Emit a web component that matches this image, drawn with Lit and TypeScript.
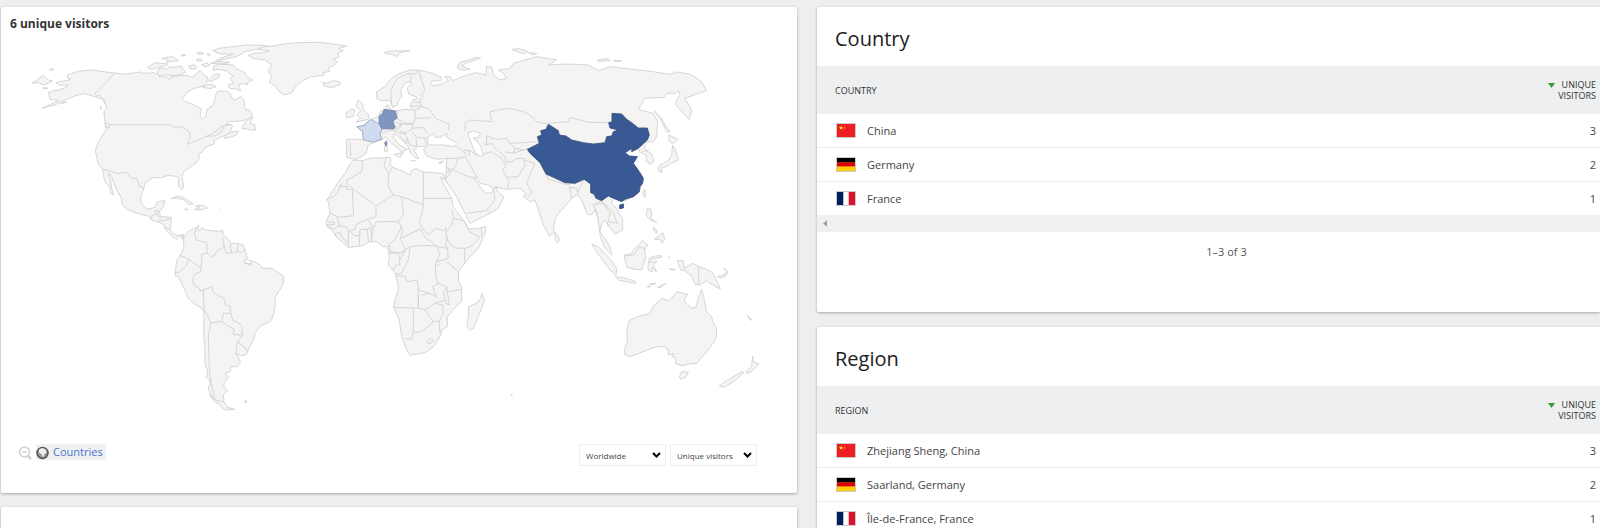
import { LitElement, html, svg, css } from "lit";
import { customElement, property } from "lit/decorators.js";

interface Shape {
  d: string;
  kind?: "low" | "mid" | "high" | "line" | "sea";
}
interface Sheet {
  x: number;
  y: number;
  shapes: Shape[];
}

// Each sheet is drawn at three units per pixel, from its own origin.
const SHEETS: Sheet[] = [
  {
    x: 0,
    y: 30,
    shapes: [
      { d: "M202,135 L235,124 275,120 310,125 345,129 365,132 400,129 420,126 430,130 460,128 475,134 480,142 500,140 508,149 512,140 530,138 560,136 575,142 590,132 597,122 605,126 612,136 622,140 620,158 610,168 580,176 562,186 552,200 545,206 552,212 575,222 604,236 600,258 606,268 618,256 622,236 640,226 645,205 649,190 655,183 680,184 690,190 696,205 705,210 722,200 732,210 735,235 738,240 749,240 756,252 757,262 730,272 690,275 676,284 696,284 696,292 688,312 670,318 650,328 640,334 645,341 618,350 608,365 597,372 597,385 592,395 570,412 552,425 545,440 550,460 550,474 545,480 538,472 535,460 536,442 530,440 515,437 500,437 485,443 460,443 435,458 432,475 422,500 423,515 428,525 440,538 465,532 472,515 495,512 490,530 478,545 482,560 514,562 514,575 510,598 520,612 535,618 548,612 552,622 548,628 540,616 530,628 515,618 498,600 492,585 480,578 455,570 445,558 430,555 405,548 380,537 366,523 365,505 350,480 335,440 325,428 332,450 335,475 341,495 332,490 328,466 318,460 312,445 308,418 295,402 290,380 286,362 295,335 308,315 318,300 315,280 312,245 320,235 312,208 285,200 250,190 225,198 190,212 165,225 125,235 160,220 175,212 150,208 145,188 155,184 175,180 200,172 202,165 182,166 168,159 175,155 200,152 212,148 203,144Z" },
      { d: "M345,129 L284,192 290,198 300,196 308,208 315,222M308,418 L330,422 350,430 380,427 396,446 410,443 418,468 432,475M330,284 H508 L520,291 545,291 565,303 572,315 562,343 600,328 630,315 655,300 664,288 690,284M672,288 L666,304 645,318 620,318M455,568 L456,556 468,552 463,543 475,541 472,556 482,562M470,574 L482,568 484,574 514,565M492,592 L510,598M548,612 L545,625", kind: "line" },
      { d: "M95,160 L112,150 130,135 145,150 158,153 145,160 130,165 115,157Z M148,119 l8,-3 5,3 -10,2Z M128,174 l8,-1 8,2 -8,1Z M182,219 l12,-4 5,2 -14,4Z M301,228 l3,8 -1,2Z M318,278 l12,6 -5,12 -10,-14Z" },
      { d: "M472,125 L480,114 500,117 512,108 520,113 545,108 548,118 558,125 545,133 520,137 500,134 475,138Z M442,113 L465,98 504,102 495,108 485,109 470,115 455,118Z M485,86 L500,82 520,80 535,92 510,95 500,98 505,88Z M543,76 l12,-3 2,4 -10,1Z M590,69 l12,-3 10,5 -18,2Z M620,72 l8,0 4,3 -8,0Z M588,89 l14,-3 6,5 -10,4Z M566,108 L582,104 592,112 585,118 570,115Z M604,104 L622,99 630,105 615,110Z M640,110 L655,102 700,105 710,116 718,120 735,128 740,140 757,150 742,158 742,165 732,160 715,164 722,183 705,176 690,176 684,165 700,160 690,145 700,138 678,122 655,118 640,122Z M625,150 L645,132 660,132 655,144 630,155Z M608,172 L625,163 640,165 648,170 630,176Z M638,62 L655,55 700,50 740,45 790,46 808,50 770,58 735,65 710,80 680,86 650,93 660,85 700,72 660,72Z M632,100 L650,94 690,97 672,102Z M725,295 L735,278 748,265 757,262 750,280 764,285 767,300 755,300Z M673,325 L682,312 700,305 715,303 710,315 695,320Z" },
      { d: "M514,506 L530,498 550,502 580,522 566,524 550,509 530,504Z M583,538 L594,534 587,527 610,526 622,534 608,539 590,540Z M553,537 l12,1 -5,3Z M598,526V539 M657,538h3" },
      { d: "M745,77 L760,70 790,68 808,62 775,58 790,50 820,48 850,42 900,38 960,37 1000,42 1040,48 1015,56 1030,62 1012,70 1018,80 1000,86 1012,95 1000,108 985,112 990,124 970,128 972,136 935,140 912,150 900,158 885,172 876,188 865,192 850,194 835,182 822,165 808,158 815,140 805,125 815,105 795,90 760,86Z" },
    ],
  },
  {
    x: 150,
    y: 190,
    shapes: [
      { d: "M100,150 L103,138 118,122 140,112 147,106 143,118 150,122 157,112 160,118 180,122 210,124 217,120 220,135 232,145 243,160 265,160 280,165 288,190 292,206 282,212 285,220 298,222 312,213 330,225 335,234 368,236 388,250 400,258 401,275 395,290 376,320 375,355 365,390 355,398 330,408 316,428 312,445 295,480 288,495 272,497 258,490 268,508 271,518 260,530 243,530 240,545 226,550 236,562 222,580 222,590 233,602 220,615 222,632 208,638 190,625 180,610 174,590 180,585 178,567 168,562 174,550 165,520 165,480 161,430 162,360 130,340 115,325 100,290 85,260 75,258 76,245 80,212 92,195 102,170Z" },
      { d: "M76,248 L88,246 108,228 116,208 95,198 88,197M140,112 L134,130 138,150 170,158 172,190 156,192 155,215 152,245M116,208 L150,232 155,232M172,190 L182,200 195,195 200,182 215,176 222,165 218,143M222,165 L228,190 245,188 240,170 243,162M245,188 L262,185 265,162M262,185 L275,188 284,178M152,245 L135,252 127,268 132,285 148,295 150,302 160,300 162,360M160,300 L185,290 190,308 222,325 226,345 240,348 242,370 220,370 215,395 182,398 172,375 162,360M242,370 L248,390 270,402 277,412 275,430 270,436 248,432 254,420 215,395M262,457 L258,490M262,457 L280,468 292,484M275,430 L280,432 262,457M182,398 L180,415 175,435 176,480 178,540 185,590 192,610 194,630 212,638M292,210 L305,212 300,228 285,215", kind: "line" },
      { d: "M178,614 L200,632 222,636 232,652 255,658 225,660 208,645 190,632Z M284,633 l5,-1 0,5 -5,0Z" },
    ],
  },
  {
    x: 310,
    y: 150,
    shapes: [
      { d: "M130,30 L160,32 180,25 240,22 243,32 240,42 248,52 280,64 300,75 306,60 318,56 340,66 400,70 406,90 392,82 400,100 425,145 430,170 440,185 462,212 470,230 474,236 500,236 528,230 525,250 505,295 480,320 460,345 446,365 445,390 455,415 455,455 430,478 412,500 412,530 395,540 393,555 370,590 345,608 300,616 290,600 275,560 268,510 250,470 258,440 266,415 256,370 235,345 238,318 232,290 218,290 200,275 180,275 155,288 115,292 100,278 80,262 65,240 50,228 48,215 60,190 55,155 50,150 60,135 90,90 105,70 118,45Z" },
      { d: "M158,34 L155,65 112,90 110,102M88,110 H110 V118 H125M50,150 L70,140 84,128 88,110 100,98M110,102 L198,168 250,135 234,108 236,70 222,48 228,25M236,70 L248,52M250,135 L275,140 340,165 340,66M342,145 H424M340,165 L336,190 328,215 340,240M127,118 L131,197 88,202 60,190M82,202 L88,228 108,230 118,242M88,226 L70,238 52,228M52,216h20v8h-20M198,168 L198,200 172,208 140,222 135,238 118,242M275,138 L280,195 265,215 200,215 190,232 174,210M265,215 L274,230 255,270 240,280 235,290M272,225 L278,245 270,265 285,295 278,308 240,305M274,265 L330,237 345,262 380,288 345,286 300,290 285,300M340,240 L355,255 378,235 400,242 408,232 408,245 412,265 406,290M408,262 L425,288 440,294 465,295 485,288 510,262 478,245 470,225 460,212 430,205 425,225 408,245M430,205 L426,180M465,295 L463,335M412,290 L415,325 380,335 390,310 380,290 412,295M410,335 L446,365M300,290 L295,330 275,370 256,372M380,335 L376,345 378,380 385,400 368,410 378,440 360,430 325,420 322,390 290,395 285,378 258,378M325,420 L325,470M250,472 L325,475 345,478M310,480 L310,545 305,568 285,565M310,548 L335,545 370,515 345,480M370,515 L388,512 400,490 398,465 375,460 345,480M325,435 L325,475M335,435 L360,430M375,460 L405,450 400,430 410,410 385,400M410,410 L418,465 408,460 408,448M412,425 L455,418M388,512 L390,550M238,310 L266,310 270,345 258,345 250,360M285,300 L270,330M115,242 V290M150,240 L148,288M150,238H172 L175,275M172,238 L182,232 185,275M190,230 L184,275M118,242 L135,258 150,255M80,262 L75,252 90,247 97,262 112,280M376,345 L388,345M240,285V308M515,235V262M352,574 L360,566 370,572 362,580 355,580Z", kind: "line" },
      { d: "M516,430 L523,450 515,475 490,535 480,540 470,528 475,500 476,470 500,460 512,445Z" },
    ],
  },
  {
    x: 310,
    y: 50,
    shapes: [
      { d: "M110,268 L150,268 160,270 158,245 142,232 160,226 183,208 205,200 212,183 232,178 226,168 236,165 240,178 256,183 285,178 310,180 300,168 310,150 322,146 318,140 296,132 292,115 305,100 298,96 285,98 272,122 275,140 264,155 262,165 248,172 240,150 215,152 200,145 200,125 222,112 245,85 270,70 300,60 325,60 360,68 395,82 393,92 365,93 362,100 368,108 395,102 415,92 405,80 420,80 430,92 445,85 470,75 500,68 528,75 530,50 545,50 550,75 570,90 590,85 580,70 565,60 600,55 610,40 680,20 740,30 715,45 770,42 835,45 865,62 900,50 1030,65 1080,73 1100,66 1140,72 1175,95 1190,122 1160,132 1125,145 1145,180 1138,208 1120,190 1098,165 1098,155 1110,135 1105,122 1095,130 1070,130 1062,142 1005,145 985,178 1000,182 1030,190 1043,215 1040,260 1030,275 1010,275 1003,290 1012,305 1025,312 1032,335 1020,342 1010,335 1008,315 988,305 985,296 965,305 966,295 945,308 958,318 982,320 970,340 1000,385 988,425 975,438 945,452 910,445 905,460 920,475 938,510 938,540 915,553 895,525 885,510 876,520 870,545 885,565 900,590 905,615 885,595 870,555 865,510 855,480 845,495 832,492 815,450 800,435 785,445 750,485 735,505 730,550 718,558 700,525 675,450 660,455 640,438 650,432 630,415 590,418 555,410 550,415 535,405 510,400 498,380 495,390 515,415 525,430 545,428 558,410 565,428 582,440 565,475 540,490 480,520 470,500 440,440 405,390 408,370 410,325 380,328 350,318 340,298 352,288 325,290 312,300 326,325 318,325 302,310 295,290 275,270 255,250 250,262 268,285 292,298 280,302 278,315 270,300 245,280 225,260 215,270 190,277 175,285 168,310 150,322 135,328 110,322Z" },
      { d: "M355,285 L352,262 370,250 375,262 390,262 412,250 408,260 440,280 435,290 400,285 375,285Z M473,250 L490,242 512,250 505,262 490,264 510,285 522,318 505,318 492,300 480,270Z", kind: "sea" },
      { d: "M342,135 L330,150 335,170 355,175 370,195 375,205 418,222 415,240M365,203 L315,205 315,180M315,180 L335,170M315,205 L305,235 340,232 352,250 M260,180 L264,208 285,220 312,220M248,213 L275,222 255,235M215,236 L255,240 272,232 275,222 305,224M305,235 L290,248 270,245M302,240 L320,262 350,265M285,250 L300,285 320,290 318,265M262,242 L270,252 285,250M270,258 L290,280 292,262M216,250 L240,240 260,245M120,275 L122,320M245,165 L242,125 250,105 262,85 295,70 315,72 325,62M300,96 L305,82 295,70M325,62 L345,120 330,138M310,155 L330,158M303,168 L332,168M205,200 L208,210M350,285 L345,268M440,290 L462,305 470,318M462,300 L480,302 505,318M480,318L475,302M410,325 L440,325 465,320 480,345 500,382M445,325 L435,352 412,368M430,360 L470,378 498,385M408,385 L430,360M408,352l12,5-8,10M470,490 L510,485 530,480 555,450 550,415M530,480 L540,490M590,345 L578,360 590,382 598,395 592,415M590,382 L625,380 645,345 640,325 620,325 605,335 588,335M640,330 L675,340 660,375 650,400 665,425 655,440M520,280 L530,285 545,280 560,300 585,320 588,340M530,258 L530,285M530,258 L560,268 590,265 600,280 688,275M600,280 L615,295 640,300M615,295 L608,310M585,305 L608,310 655,295M520,312 L545,305 575,325 585,345M465,242 L465,220 480,210 545,215 540,185 565,180 600,175 640,185 660,195 680,215 712,222M712,220 L775,215 780,202 835,217 896,218M708,372 L715,388 778,405 780,398M778,410 L785,445M778,412 L800,415 805,435M822,388 L805,425M795,400 L822,388M875,452 L850,465 860,485 865,510M850,465 L880,460 900,490 895,515M875,452 L910,490 922,520 895,515M890,515 L895,530M1000,305 L1018,300", kind: "line" },
      { d: "M145,150 L158,162 160,180 178,195 175,208 138,216 152,205 140,195 152,182 138,168Z M122,177 L135,178 130,200 110,203 108,190Z M38,97 L50,100 70,92 88,95 92,103 65,113 42,108Z M223,290 l9,-2 1,15 -9,2Z M252,313 l22,-3 -4,13Z M386,338 l14,-4 -7,7Z M302,332h16 M442,55 L448,38 500,22 512,25 470,38 455,48 480,58 460,60Z M222,8 L240,3 300,2 268,8 262,20 245,12 235,13Z" },
      { d: "M183,208 L200,218 218,228 215,240 210,252 216,268 205,270 190,277 160,270 158,245 140,230 165,226 170,218Z", kind: "low" },
      { d: "M224,278 l6,-5 1,11 -4,4Z M222,178 L256,183 261,205 248,213 255,230 252,236 215,236 207,220 208,198 218,190Z", kind: "mid" },
    ],
  },
  {
    x: 510,
    y: 40,
    shapes: [
      { d: "M432,212 L455,235 465,255 480,275 470,275 455,245Z M475,285 L505,298 490,310 478,305Z M488,315 L498,335 505,360 480,372 470,380 455,382 455,398 448,395 443,385 450,375 475,362 485,345Z M403,448 l4,10 -3,14 -5,-12Z M135,575 L150,600 142,608 135,598Z M5,28 l20,-2 28,8 -5,6 -20,-2Z M55,38 l26,2 -10,5Z M263,60 l30,-4 8,6 -36,2Z M310,62 l25,0 -10,3Z" },
      { d: "M115,253 L145,272 148,285 168,288 185,300 220,308 250,312 285,308 290,290 305,288 310,275 325,270 300,264 296,248 306,245 306,220 335,222 350,238 365,248 385,264 412,264 418,285 412,300 385,325 365,335 366,325 345,338 358,348 382,350 370,370 388,395 400,415 398,430 390,440 388,455 370,470 345,478 335,485 310,475 295,468 275,482 258,475 252,462 242,458 242,432 222,418 195,430 165,428 130,412 108,402 90,368 60,340 52,328 72,318 88,310 82,290 95,285 92,272 108,268Z M329,495 l12,-3 -1,12 -11,2Z", kind: "high" },
    ],
  },
  {
    x: 560,
    y: 190,
    shapes: [
      { d: "M262,55 L272,58 275,70 273,85 290,98 268,88 258,72Z M280,112 l10,8 0,12 -8,-10Z M283,148 L296,138 308,128 315,148 306,160 300,148Z M95,162 L115,170 155,212 170,235 168,256 150,240 120,200Z M166,260 L200,265 228,275 226,281 175,270Z M260,290 l12,-2 -4,4Z M268,282l20,-2-10,4Z M293,292l25,-13-18,14Z M328,236l18,3-10,1Z M327,198l3,8M192,195 L212,192 225,175 248,152 263,165 252,180 258,200 245,240 225,238 200,232Z M268,205 L285,198 304,197 304,202 275,208 270,218 292,213 280,225 290,247 276,232 276,246 264,240 264,225Z M352,212 L370,212 372,235 398,220 418,230 440,238 458,248 468,268 481,297 450,280 440,272 420,285 405,282 396,260 375,242 362,240Z M472,260 L492,255 500,245 490,235 505,246 495,260 480,264Z" },
      { d: "M195,198 L222,194 238,170 258,178M416,230V285", kind: "line" },
      { d: "M425,298 L432,325 440,365 455,380 458,395 470,415 468,445 452,470 440,485 410,520 385,522 370,528 348,522 346,503 335,500 342,490 325,495 325,480 312,470 290,470 250,485 210,500 195,495 192,485 202,455 200,420 208,392 232,380 270,370 280,348 305,325 328,332 350,305 382,313 372,332 395,355 408,352 415,325Z M365,545 L385,546 378,562 362,568 358,560Z M578,498 L580,515 597,522 575,545 560,550 558,545 575,528Z M545,545 L552,548 520,575 492,592 478,588 495,575Z M562,376 l14,14 -5,0Z M-148,615 l5,-1 -2,4Z" },
    ],
  },
];

@customElement("world-map")
export class WorldMap extends LitElement {
  static styles = css`
    :host { display: block; }
    .map { display: block; width: 100%; height: auto; }
    .land { fill: #f5f4f3; stroke: #d0d0ce; stroke-width: 2.6; stroke-linejoin: round; }
    .sea { fill: #fff; }
    .line { fill: none; }
    .low { fill: #cedbf0; stroke: #9ba7bd; }
    .mid { fill: #8195c1; stroke: #7284ad; }
    .high { fill: #385993; stroke: #395482; }
  `;
  render() {
    return html`<svg class="map" viewBox="1 34 796 386" role="img" aria-label="World map of visitors">
      ${SHEETS.map(
        (s) => svg`<g transform="translate(${s.x} ${s.y}) scale(0.33333)">
          ${s.shapes.map((p) => svg`<path class="land ${p.kind ?? ""}" d=${p.d}></path>`)}
        </g>`
      )}
    </svg>`;
  }
}

const flags: Record<string, unknown> = {
  cn: svg`<rect width="20" height="15" fill="#ee1c25"/><path fill="#ff0" d="M4.500 2l.6 1.600h1.700l-1.300 1.100.5 1.700-1.500-1-1.500 1 .5-1.700-1.300-1.100h1.700Z"/><path d="M7.500 2l1 1v2l-1 1.500" stroke="#f7941d" fill="none"/>`,
  de: svg`<rect width="20" height="5.300"/><rect y="5" width="20" height="5" fill="#d00"/><rect y="10" width="20" height="5" fill="#ffce00"/>`,
  fr: svg`<rect width="20" height="15" fill="#fff"/><rect width="7" height="15" fill="#00205b"/><rect x="13" width="7" height="15" fill="#d8142c"/>`,
};

interface Row {
  flag: string;
  name: string;
  visitors: number;
}

@customElement("report-card")
export class ReportCard extends LitElement {
  @property() heading = "";
  @property() summary = "";
  @property({ attribute: false }) rows: Row[] = [];

  static styles = css`
    :host {
      display: block;
      background: #fff;
      border-radius: 2px 0 0 2px;
      box-shadow: 0 1px 3px rgba(0, 0, 0, 0.3);
      padding-bottom: 40px;
    }
    .heading { margin: 0; padding: 18px 18px 13px; font-size: 20px; line-height: 28px; font-weight: 400; color: #212121; }
    .table { width: 100%; border-collapse: separate; border-spacing: 0; font-size: 11px; color: #444; }
    .th { box-sizing: border-box; height: 48px; padding: 0 18px; background: #edeff1; font-size: 9px; line-height: 11px; font-weight: 400; text-align: left; text-transform: uppercase; color: #333; }
    .th.num, .td.num { text-align: right; padding-right: 4px; }
    .sort { width: 7px; height: 5px; margin-right: 4px; fill: #2f9e35; }
    .td { box-sizing: border-box; height: 34px; padding: 0 18px; border-bottom: 1px solid #ededed; }
    tr:last-child .td { height: 33px; border-bottom: 0; }
    .cell { display: flex; align-items: center; gap: 11px; padding-left: 1px; }
    .flag { box-sizing: border-box; width: 20px; height: 15px; border: 1px solid #ccc; }
    .scroll { display: flex; align-items: center; height: 17px; padding-left: 6px; background: #f0f0f0; }
    .arrow { width: 4px; height: 7px; fill: #a0a0a0; }
    .summary { margin: 0; padding: 10px 0 10px 36px; text-align: center; font-size: 11px; line-height: 20px; color: #555; }
  `;
  render() {
    return html`
      <h2 class="heading">${this.heading}</h2>
      <table class="table">
        <thead>
          <tr>
            <th class="th" scope="col">${this.heading}</th>
            <th class="th num" scope="col">
              <svg class="sort" viewBox="0 0 7 5" aria-hidden="true"><path d="M0 0h7L3.500 5Z"/></svg>
              Unique<br />Visitors
            </th>
          </tr>
        </thead>
        <tbody>
          ${this.rows.map(
            (r) => html`<tr>
              <td class="td">
                <div class="cell">
                  <svg class="flag" viewBox="0 0 20 15" preserveAspectRatio="none" aria-hidden="true">${flags[r.flag]}</svg>
                  <span>${r.name}</span>
                </div>
              </td>
              <td class="td num">${r.visitors}</td>
            </tr>`
          )}
        </tbody>
      </table>
      <div class="scroll"><svg class="arrow" viewBox="0 0 5 8" aria-hidden="true"><path d="M5 0v8L0 4Z"/></svg></div>
      <p class="summary">${this.summary}</p>
    `;
  }
}

@customElement("app-root")
export class AppRoot extends LitElement {
  static styles = css`
    :host {
      display: block;
      box-sizing: border-box;
      height: 100vh;
      overflow: hidden;
      background: #edeef0;
      font-family: "Open Sans", "Noto Sans", sans-serif;
    }
    .page { display: grid; grid-template-columns: minmax(0, 796fr) minmax(0, 783fr); gap: 20px; padding: 7px 0 0 1px; }
    .column { display: grid; gap: 14px; align-content: start; }
    .right { gap: 15px; }
    .card { background: #fff; border-radius: 2px; box-shadow: 0 1px 3px rgba(0, 0, 0, 0.3); }
    .empty { min-height: 200px; }
    .title { margin: 0; padding: 7px 9px 0; font-size: 12px; line-height: 20px; font-weight: 700; color: #333; }
    .controls { display: flex; align-items: flex-start; justify-content: space-between; padding: 24px 40px 27px 17px; }
    .group { display: flex; align-items: center; gap: 4px; }
    .zoom { display: flex; padding: 2px 0 0; border: 0; background: none; }
    .icon { width: 14px; height: 14px; }
    .link { display: flex; align-items: center; gap: 3px; padding-right: 3px; background: #f1f1f1; color: #4674d2; font-size: 11px; line-height: 16px; text-decoration: none; }
    .link .icon { margin-top: 2px; }
    .picker { display: grid; align-items: center; width: 87px; }
    .select { grid-area: 1 / 1; appearance: none; width: 100%; height: 22px; padding: 0 6px; border: 1px solid #eee; border-radius: 0; background: #fff; color: #444; font: 8px "Open Sans", "Noto Sans", sans-serif; }
    .chevron { grid-area: 1 / 1; justify-self: end; width: 9px; height: 6px; margin-right: 5px; pointer-events: none; fill: none; stroke: #000; stroke-width: 2; }
  `;

  private picker(label: string, value: string) {
    return html`<label class="picker">
      <select class="select" aria-label=${label}><option>${value}</option></select>
      <svg class="chevron" viewBox="0 0 9 6" aria-hidden="true"><path d="M1 1l3.500 3.500L8 1"/></svg>
    </label>`;
  }

  render() {
    return html`<main class="page">
      <div class="column">
        <section class="card">
          <h2 class="title">6 unique visitors</h2>
          <world-map></world-map>
          <div class="controls">
            <div class="group">
              <button class="zoom" aria-label="Zoom out">
                <svg class="icon" viewBox="0 0 14 14" fill="none" stroke="#d0d0d0" stroke-width="1.500"><circle cx="6.500" cy="6" r="5"/><path d="M4 6h5"/><path d="M10 10l3 3" stroke-width="2.500"/></svg>
              </button>
              <a class="link" href="#countries">
                <svg class="icon" viewBox="0 0 14 14" aria-hidden="true"><circle cx="6.500" cy="7" r="5.500" fill="#999" stroke="#555" stroke-width="1.500"/><path d="M3 3.500L6 2l4 1.500.5 3L8.500 8 7 11.500 5.500 8 3 6.500Z" fill="#eee"/></svg>
                <span>Countries</span>
              </a>
            </div>
            <div class="group">${this.picker("Area", "Worldwide")}${this.picker("Metric", "Unique visitors")}</div>
          </div>
        </section>
        <section class="card empty"></section>
      </div>
      <div class="column right">
        <report-card
          heading="Country"
          summary="1–3 of 3"
          .rows=${[
            { flag: "cn", name: "China", visitors: 3 },
            { flag: "de", name: "Germany", visitors: 2 },
            { flag: "fr", name: "France", visitors: 1 },
          ]}
        ></report-card>
        <report-card
          heading="Region"
          summary="1–3 of 3"
          .rows=${[
            { flag: "cn", name: "Zhejiang Sheng, China", visitors: 3 },
            { flag: "de", name: "Saarland, Germany", visitors: 2 },
            { flag: "fr", name: "Île-de-France, France", visitors: 1 },
          ]}
        ></report-card>
      </div>
    </main>`;
  }
}
